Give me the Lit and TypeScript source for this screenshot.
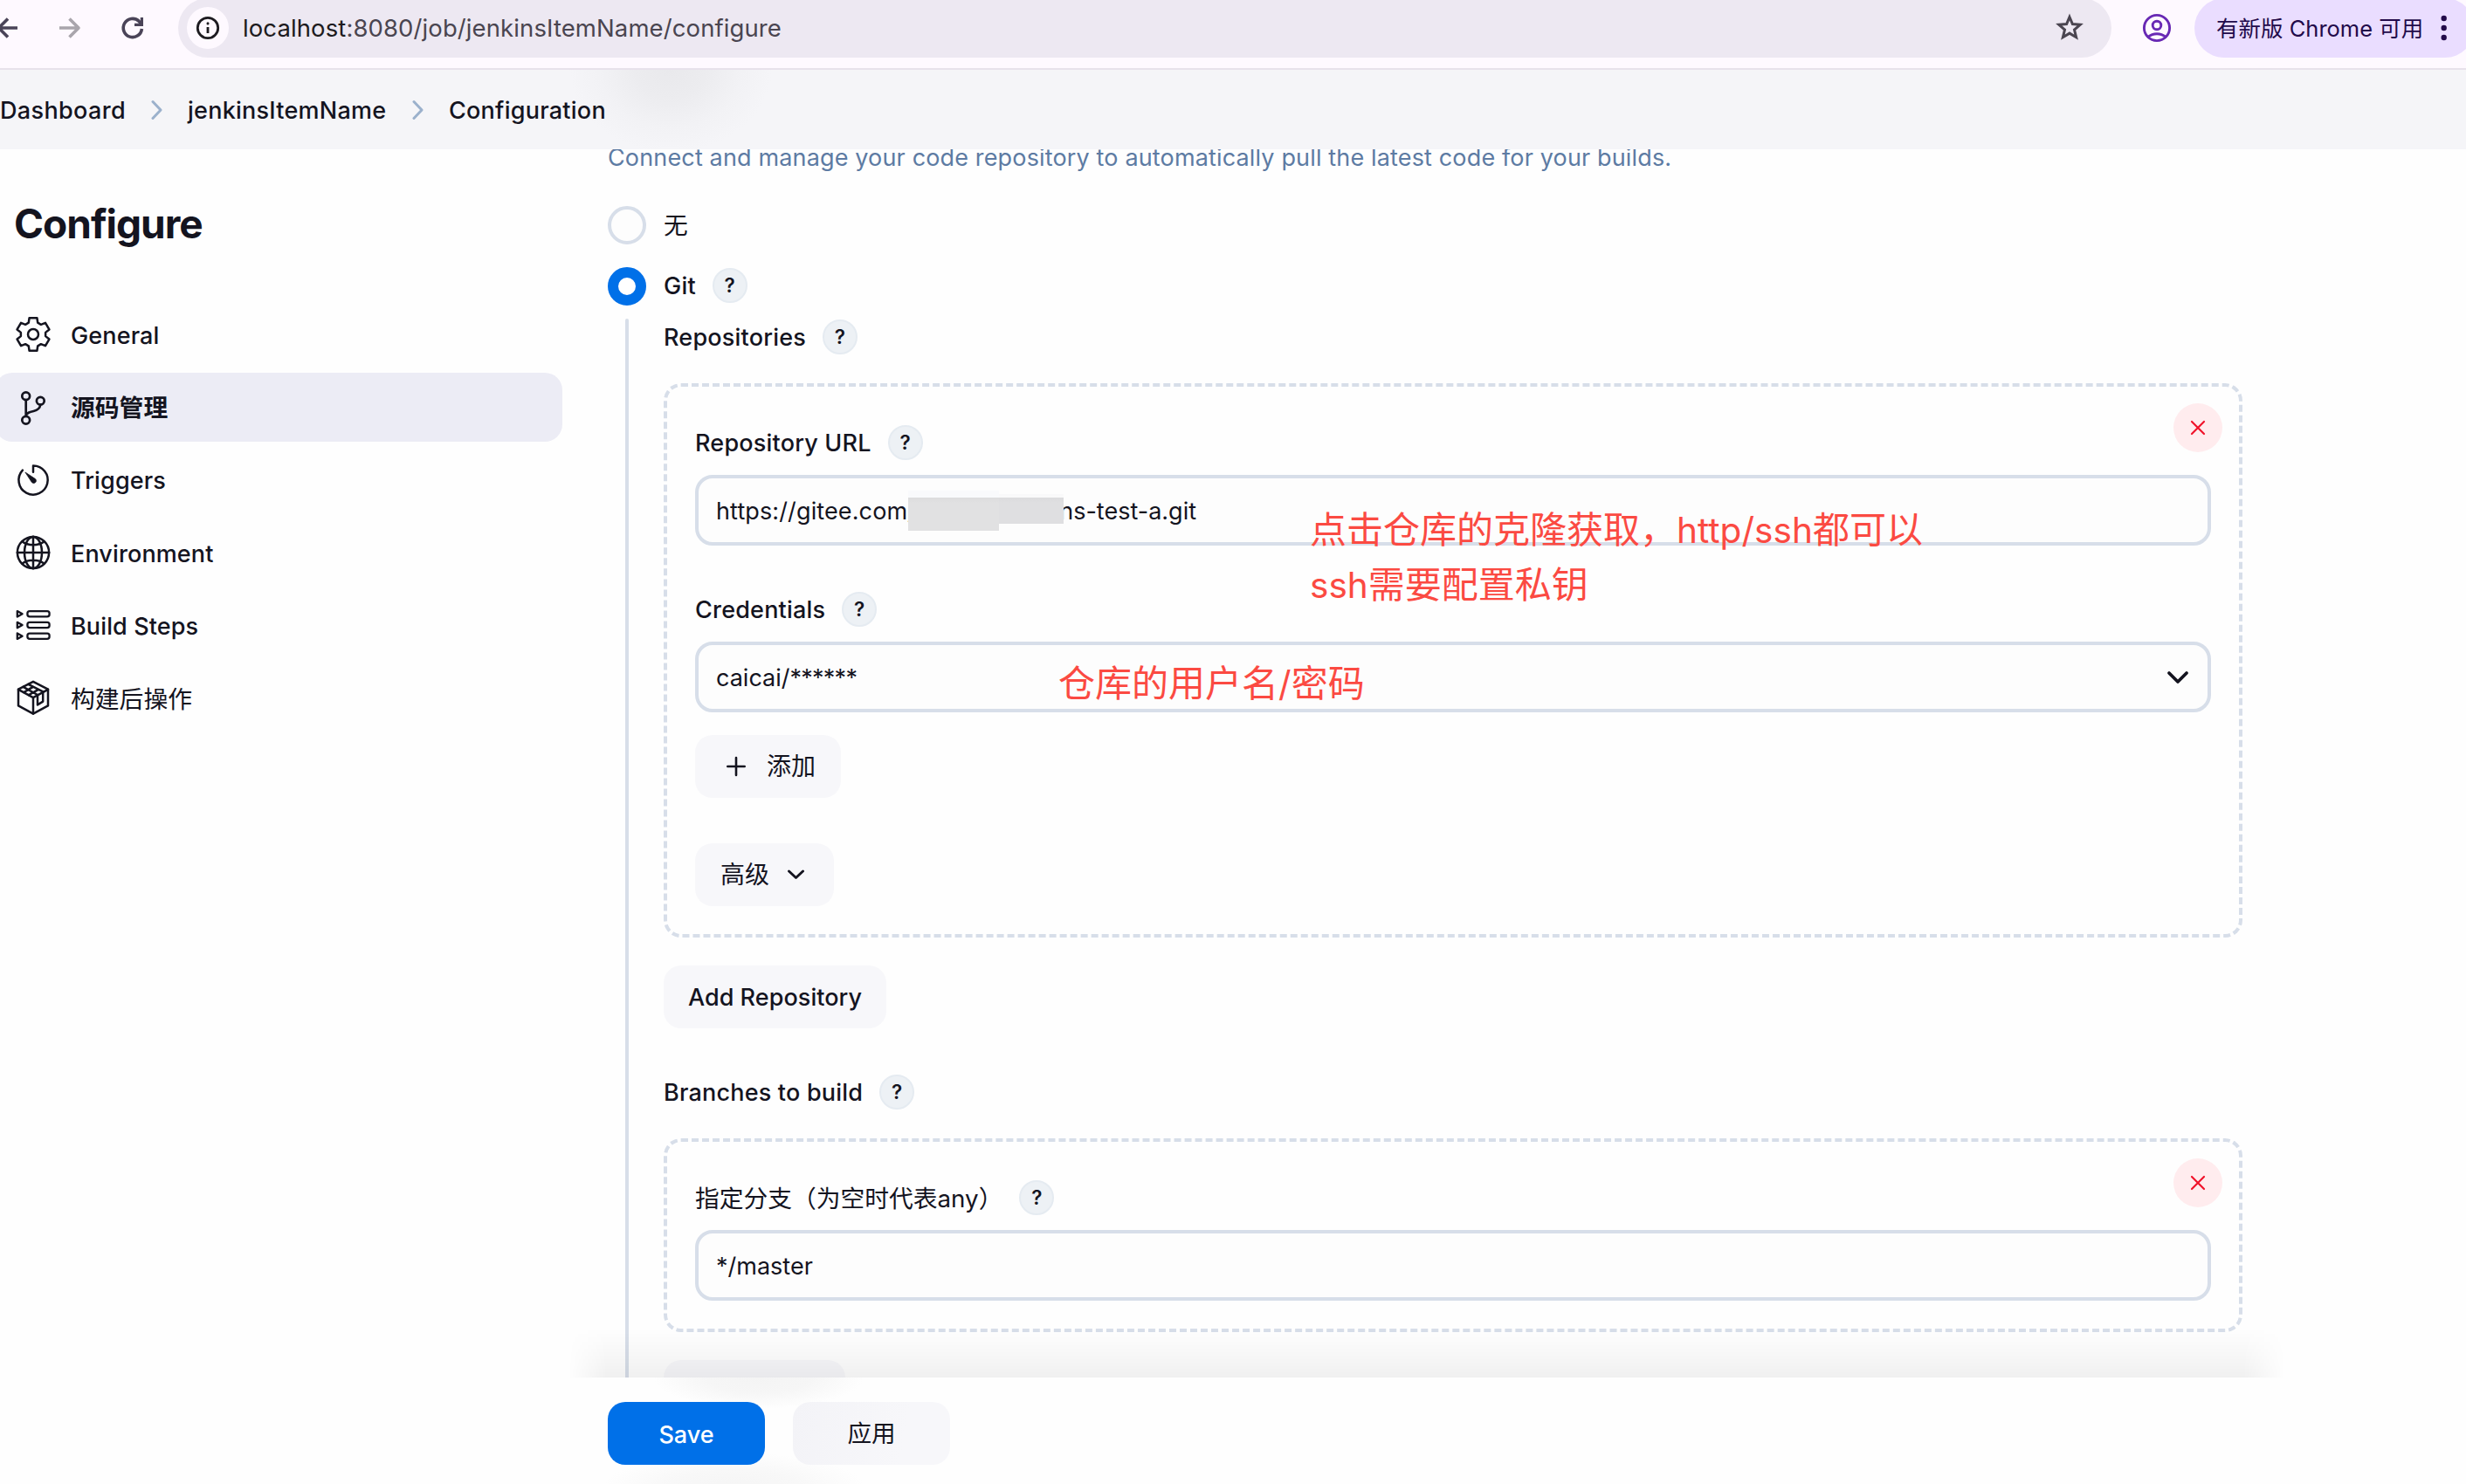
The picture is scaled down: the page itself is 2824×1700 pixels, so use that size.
import { LitElement, html, css, svg } from "lit";
import { customElement, property } from "lit/decorators.js";

/** Outline of a six-toothed gear centred on (20, 20). */
function gearPath(): string {
  const corners: [number, number][] = [
    [14.3, -21.5],
    [19.2, -13.3],
    [19.2, 13.3],
    [14.3, 21.5],
  ];
  const points: string[] = [];
  for (let k = 0; k < 6; k++) {
    for (const [radius, offset] of corners) {
      const a = ((60 * k + offset) * Math.PI) / 180;
      points.push(`${(20 + radius * Math.sin(a)).toFixed(2)} ${(20 - radius * Math.cos(a)).toFixed(2)}`);
    }
  }
  return `M${points.join("L")}Z`;
}

const navIcons: Record<string, unknown> = {
  gear: svg`<path d=${gearPath()} /><circle cx="20" cy="20" r="6" />`,
  branch: svg`<g stroke-width="2.7"><circle cx="11.7" cy="6.8" r="4.4" /><circle cx="28.3" cy="12.2" r="4.4" />
    <circle cx="11.7" cy="34.2" r="4.4" /><path d="M11.7 11.2V29.8M28.3 16.6C27.6 21.6 24.6 23 20.4 24C15.6 25.1 12.6 25.8 11.7 29" /></g>`,
  timer: svg`<path d="M20 10.8V3.4A16.6 16.6 0 1 1 7.9 8.7" />
    <path d="M11.2 11.2L22.4 18.6A2.8 2.8 0 1 1 18.2 22.2Z" fill="currentColor" stroke-width="0.8" />`,
  globe: svg`<g stroke-width="2.5"><circle cx="20" cy="20" r="18.1" /><ellipse cx="20" cy="20" rx="10" ry="18.1" />
    <path d="M20 1.8V38.2M1.8 20H38.2M7.6 7.6C14 12.6 26 12.6 32.4 7.6M7.6 32.4C14 27.4 26 27.4 32.4 32.4" /></g>`,
  steps: svg`<g stroke-width="2.3">${[7.3, 20, 32.7].map(
    (y) => svg`<rect x="13.4" y=${y - 3.1} width="25.2" height="6.2" rx="2.6" /><path d=${`M1.8 ${y - 3.2}L7.6 ${y}L1.8 ${y + 3.2}Z`} />`,
  )}</g>`,
  package: svg`<g stroke-width="2.5"><path d="M20 1.8L37 10.6V29.4L20 38.6L3 29.4V10.6Z" /><path d="M3 10.8L20 20.2L37 10.8M20 20.2V38.4" />
    <path d="M8.6 7.8L25 17V28.4L31.2 24.6V13.4L14.4 4.8M9.4 14L14.8 10.8M15 17.2L20.4 14M20 7.8L15.4 10.4M26 10.8L21.2 13.6" /></g>`,
};

@customElement("help-badge")
export class HelpBadge extends LitElement {
  static styles = css`
    :host {
      display: block;
      flex: none;
    }
    .badge {
      width: 40px;
      height: 40px;
      box-sizing: border-box;
      border: 2px solid #e5ebf1;
      border-radius: 50%;
      background: #edf1f5;
      display: flex;
      align-items: center;
      justify-content: center;
      font: 600 22.5px/36px Inter, sans-serif;
      color: #14141f;
    }
  `;
  render() {
    return html`<div class="badge">?</div>`;
  }
}

@customElement("side-item")
export class SideItem extends LitElement {
  @property() icon = "gear";
  @property() label = "";
  @property({ type: Boolean }) active = false;

  static styles = css`
    .item {
      display: flex;
      align-items: center;
      height: 79px;
      margin-left: -6px;
      width: 650px;
      box-sizing: border-box;
      padding-left: 24px;
      border-radius: 20px;
      gap: 23px;
      color: #14141f;
      font-size: 27px;
      font-weight: 480;
      letter-spacing: 0.12px;
      line-height: 40px;
      white-space: nowrap;
    }
    .item span {
      padding-top: 3px;
    }
    .han {
      font-size: 27.8px;
      letter-spacing: 0;
    }
    .regular {
      font-weight: 400;
    }
    .active {
      background: #ececf5;
      font-weight: 700;
    }
    .active span {
      padding-top: 1px;
    }
    svg {
      width: 40px;
      height: 40px;
      flex: none;
      fill: none;
      stroke: currentColor;
      stroke-width: 2.5;
      stroke-linejoin: round;
      stroke-linecap: round;
    }
  `;
  render() {
    const han = /[\u4e00-\u9fff]/.test(this.label);
    return html`<div class="item ${this.active ? "active" : ""} ${han ? "han" : ""} ${han && !this.active ? "regular" : ""}">
      <svg viewBox="0 0 40 40">${navIcons[this.icon]}</svg><span>${this.label}</span>
    </div>`;
  }
}

@customElement("app-root")
export class AppRoot extends LitElement {
  static styles = css`
    :host {
      display: block;
      width: 2824px;
      height: 1700px;
      overflow: hidden;
      background: #fefefe;
      color: #14141f;
      font-family: Inter, "Noto Sans CJK SC", sans-serif;
      font-size: 27px;
      line-height: 40px;
    }
    .page {
      display: flex;
      flex-direction: column;
      height: 1700px;
    }
    svg {
      display: block;
      flex: none;
      fill: none;
      stroke-linecap: round;
      stroke-linejoin: round;
    }

    /* browser toolbar */
    .toolbar {
      height: 78px;
      flex: none;
      background: #fef9ff;
      border-bottom: 2px solid #e7e1eb;
      display: flex;
      align-items: flex-start;
      overflow: hidden;
    }
    .nav {
      width: 204px;
      height: 64px;
      flex: none;
      stroke-linecap: butt;
    }
    .sharp {
      stroke-linejoin: miter;
    }
    .butt {
      stroke-linecap: butt;
    }
    .address {
      width: 2214px;
      height: 68px;
      margin-top: -2px;
      border-radius: 34px;
      background: #ede8f2;
      display: flex;
      align-items: center;
      box-sizing: border-box;
      padding: 0 30px 0 10px;
      flex: none;
    }
    .info {
      width: 48px;
      height: 48px;
      border-radius: 50%;
      background: #fef9ff;
      margin-right: 16px;
    }
    .url {
      flex: 1;
      font-size: 27.5px;
      letter-spacing: 0.1px;
      color: #4a4550;
      white-space: nowrap;
    }
    .host {
      color: #1d1b20;
    }
    .avatar {
      margin: 14px 25px 0 34px;
    }
    .update {
      width: 321px;
      height: 68px;
      margin-top: -2px;
      border-radius: 34px;
      background: #eaddff;
      color: #220a4a;
      font-size: 25.5px;
      display: flex;
      align-items: center;
      box-sizing: border-box;
      padding: 2px 0 0 25px;
      flex: none;
      white-space: nowrap;
    }
    .update-text {
      width: 251px;
    }
    .dots {
      fill: #220a4a;
      margin-bottom: 2px;
    }

    /* breadcrumbs */
    .crumbs {
      height: 91px;
      flex: none;
      box-sizing: border-box;
      background: radial-gradient(ellipse 116px 94px at 768px 0, #e9e9ec 0%, #ececef 35%, #f2f2f5 70%, #f5f5f8 100%) #f5f5f8;
      display: flex;
      align-items: center;
      font-weight: 500;
      white-space: nowrap;
    }
    .crumbs span {
      padding-top: 3px;
    }
    .crumb-dashboard {
      width: 173px;
      letter-spacing: 0.35px;
    }
    .crumb-item {
      width: 257px;
      margin-left: 28px;
      letter-spacing: 0.25px;
    }
    .crumb-last {
      margin-left: 28px;
      letter-spacing: 0.25px;
    }

    /* body */
    .body {
      flex: 1;
      min-height: 0;
      display: flex;
    }
    .sidebar {
      width: 651px;
      flex: none;
      display: flex;
      flex-direction: column;
      gap: 4.2px;
    }
    h1 {
      margin: 55px 0 53.8px 16px;
      font-size: 46px;
      line-height: 60px;
      font-weight: 700;
      letter-spacing: -1px;
    }
    .main {
      flex: 1;
      min-width: 0;
      display: flex;
      flex-direction: column;
    }
    .content {
      height: 1407px;
      flex: none;
      overflow: hidden;
      position: relative;
      box-sizing: border-box;
      padding-left: 45px;
    }
    .shade {
      position: absolute;
      left: 0;
      bottom: 0;
      width: 1966px;
      height: 56px;
      background: linear-gradient(rgba(0, 0, 0, 0), rgba(0, 0, 0, 0.022) 45%, rgba(0, 0, 0, 0.055));
      mask-image: linear-gradient(90deg, transparent, #000 44px, #000 1918px, transparent);
    }
    .desc {
      margin-top: -10px;
      color: #5d7ba3;
      letter-spacing: 0.15px;
      white-space: nowrap;
    }
    .choice {
      display: flex;
      align-items: center;
      height: 44px;
      font-weight: 480;
    }
    .choice-none {
      margin-top: 35px;
    }
    .choice-git {
      margin-top: 26px;
    }
    .radio {
      width: 44px;
      height: 44px;
      box-sizing: border-box;
      border-radius: 50%;
      border: 4px solid #d7dee9;
      background: #fdfdfd;
      margin-right: 20px;
    }
    .radio-on {
      border: 12.5px solid #0070e8;
      background: #fff;
    }
    .lift {
      margin-bottom: 2px;
    }
    .nested {
      display: flex;
      margin: 15px 0 0 20px;
    }
    .rail {
      width: 4px;
      height: 1300px;
      flex: none;
      border-radius: 2px;
      background: #d7dee9;
    }
    .fields {
      margin-left: 40px;
      width: 1808px;
      padding-top: 1px;
    }
    .label {
      display: flex;
      align-items: center;
      height: 40px;
      gap: 19px;
      font-weight: 480;
      letter-spacing: 0.2px;
      white-space: nowrap;
    }
    .label span {
      padding-top: 2px;
    }
    .label .han,
    .han {
      font-size: 27.75px;
      font-weight: 400;
      letter-spacing: 0;
    }
    .choice-none .han {
      margin-top: -1px;
    }
    .chunk {
      position: relative;
      box-sizing: border-box;
      border: 4px dashed #d7dee9;
      border-radius: 20px;
      padding: 44px 32px 32px;
      margin-top: 33px;
    }
    .close {
      position: absolute;
      top: 19px;
      right: 19px;
      width: 56px;
      height: 56px;
      border-radius: 50%;
      background: #ffecee;
    }
    .input {
      height: 81px;
      box-sizing: border-box;
      margin-top: 17px;
      border: 4px solid #d7dee9;
      border-radius: 20px;
      background: #fdfdfd;
      display: flex;
      align-items: center;
      padding: 2px 20px 0;
      white-space: nowrap;
    }
    .second {
      margin-top: 53px;
    }
    .url-head {
      width: 220px;
      letter-spacing: 0.12px;
    }
    .url-tail {
      width: 152px;
      display: flex;
      justify-content: flex-end;
    }
    .mask {
      display: flex;
      align-self: flex-start;
      margin-top: 12px;
      height: 46px;
      z-index: 1;
    }
    .mask-a {
      width: 104px;
      height: 46px;
      background: linear-gradient(#f9fafc 0 8px, #dcdcdd 8px, #e1e1e2 14px);
    }
    .mask-b {
      width: 74px;
      height: 38px;
      background: linear-gradient(#fdfdfd 0 4px, #f9f9fa 4px 8px, #dbdbdd 8px, #dfdfe1 14px);
    }
    .grow {
      flex: 1;
    }
    .stars {
      letter-spacing: -0.75px;
    }
    .btn {
      display: flex;
      align-items: center;
      width: max-content;
      height: 72px;
      border-radius: 20px;
      background: #f7f7fa;
      box-sizing: border-box;
      font-weight: 480;
      white-space: nowrap;
    }
    .btn-add {
      width: 167px;
      margin-top: 26px;
      padding-left: 36px;
      gap: 24px;
      font-size: 28px;
      font-weight: 400;
    }
    .btn-adv {
      width: 159px;
      margin-top: 52px;
      padding-left: 29px;
      gap: 20px;
      font-size: 28px;
      font-weight: 400;
    }
    .btn-repo {
      width: 255px;
      margin-top: 32px;
      padding-top: 2px;
      justify-content: center;
      letter-spacing: 0.05px;
    }
    .btn-more {
      width: 208px;
      margin-top: 32px;
    }

    /* red annotations over the form */
    .note {
      position: absolute;
      color: #fb4a42;
      font-size: 42px;
      line-height: 62px;
      white-space: nowrap;
    }
    .latin {
      font-size: 40.5px;
      letter-spacing: 0.05px;
    }
    .note-url {
      left: 849px;
      top: 405px;
    }
    .note-cred {
      left: 561px;
      top: 581px;
    }

    /* footer */
    .footer {
      flex: 1;
      display: flex;
      gap: 32px;
      padding: 28px 0 0 45px;
      background:
        radial-gradient(ellipse 120px 36px at 218px 0, #f4f4f4, #f6f6f6 50%, rgba(254, 254, 254, 0)),
        radial-gradient(ellipse 150px 40px at 190px 126px, #f5f5f5, #f8f8f8 50%, rgba(254, 254, 254, 0)),
        #fefefe;
    }
    .btn-foot {
      width: 180px;
      justify-content: center;
    }
    .btn-save {
      background: #0070e8;
      color: #fff;
      padding-top: 3px;
    }
    .btn-apply {
      font-size: 27.6px;
      font-weight: 400;
      background: linear-gradient(100deg, #f3f3f7, #f7f7fa 70%);
    }
  `;

  private closeButton() {
    return html`<div class="close">
      <svg width="56" height="56" stroke="#f0142b" stroke-width="2.2"><path d="M21 21L35 35M35 21L21 35" /></svg>
    </div>`;
  }

  private crumbArrow() {
    return html`<svg width="14" height="24" stroke="#9bb1cc" stroke-width="3"><path d="M2 2.5L11 12L2 21.5" /></svg>`;
  }

  private toolbar() {
    return html`<div class="toolbar">
      <svg class="nav" viewBox="0 0 204 64" stroke-width="3.6">
        <path stroke="#4a4458" d="M20 32H-1M9 21.5L-1.5 32L9 42.5" />
        <path stroke="#a9a5ac" d="M68 32H90M79.5 21.5L90 32L79.5 42.5" />
        <g stroke="#4a4458" class="sharp">
          <path d="M162.4 33A10.6 10.6 0 1 1 159 24.2L162 27.4" />
          <path d="M162.4 20V28.4H154" stroke-width="3.2" />
        </g>
      </svg>
      <div class="address">
        <div class="info">
          <svg width="48" height="48" stroke="#1d1b20">
            <circle cx="24" cy="24" r="11.7" stroke-width="2.8" />
            <path class="butt" d="M24 23V30" stroke-width="2.8" />
            <path d="M24 18.8V18.9" stroke-width="3" />
          </svg>
        </div>
        <div class="url"><span class="host">localhost</span>:8080/job/jenkinsItemName/configure</div>
        <svg class="sharp" width="36" height="36" viewBox="0 0 36 36" stroke="#4a4550" stroke-width="3">
          <path d="M18 5.5L21.4 13.6L30.2 14.3L23.5 20.1L25.6 28.7L18 24.1L10.4 28.7L12.5 20.1L5.8 14.3L14.6 13.6Z" />
        </svg>
      </div>
      <svg class="avatar" width="36" height="36" stroke="#6829b4" stroke-width="2.9">
        <circle cx="18" cy="18" r="14.6" /><circle cx="18" cy="15" r="4.8" /><path d="M8.2 28.2C13.5 23.6 22.5 23.6 27.8 28.2" />
      </svg>
      <div class="update">
        <span class="update-text">有新版 Chrome 可用</span>
        <svg class="dots" width="20" height="36">
          <circle cx="9.7" cy="7" r="3.2" /><circle cx="9.7" cy="18" r="3.2" /><circle cx="9.7" cy="29" r="3.2" />
        </svg>
      </div>
    </div>`;
  }

  private repositoryChunk() {
    return html`<div class="chunk">
      ${this.closeButton()}
      <div class="label"><span>Repository URL</span><help-badge></help-badge></div>
      <div class="input">
        <span class="url-head">https://gitee.com/</span>
        <div class="mask"><div class="mask-a"></div><div class="mask-b"></div></div>
        <span class="url-tail">ns-test-a.git</span>
      </div>
      <div class="label second"><span>Credentials</span><help-badge></help-badge></div>
      <div class="input">
        <span class="grow">caicai/<span class="stars">******</span></span>
        <svg width="28" height="20" stroke="#14141f" stroke-width="3.8"><path d="M4 4L14 14L24 4" /></svg>
      </div>
      <div class="btn btn-add">
        <svg width="22" height="24" stroke="#14141f" stroke-width="2.6"><path d="M11 2V22M1.3 12H20.7" /></svg>
        <span>添加</span>
      </div>
      <div class="btn btn-adv">
        <span>高级</span>
        <svg width="20" height="16" stroke="#14141f" stroke-width="2.9"><path d="M2.5 4L10.5 11.5L18.5 4" /></svg>
      </div>
    </div>`;
  }

  render() {
    return html`<div class="page">
      ${this.toolbar()}
      <div class="crumbs">
        <span class="crumb-dashboard">Dashboard</span>${this.crumbArrow()}
        <span class="crumb-item">jenkinsItemName</span>${this.crumbArrow()}
        <span class="crumb-last">Configuration</span>
      </div>
      <div class="body">
        <div class="sidebar">
          <h1>Configure</h1>
          <side-item icon="gear" label="General"></side-item>
          <side-item icon="branch" label="源码管理" active></side-item>
          <side-item icon="timer" label="Triggers"></side-item>
          <side-item icon="globe" label="Environment"></side-item>
          <side-item icon="steps" label="Build Steps"></side-item>
          <side-item icon="package" label="构建后操作"></side-item>
        </div>
        <div class="main">
          <div class="content">
            <div class="desc">Connect and manage your code repository to automatically pull the latest code for your builds.</div>
            <div class="choice choice-none"><div class="radio"></div><span class="han">无</span></div>
            <div class="choice choice-git">
              <div class="radio radio-on"></div>
              <div class="label lift"><span>Git</span><help-badge></help-badge></div>
            </div>
            <div class="nested">
              <div class="rail"></div>
              <div class="fields">
                <div class="label"><span>Repositories</span><help-badge></help-badge></div>
                ${this.repositoryChunk()}
                <div class="btn btn-repo">Add Repository</div>
                <div class="label second"><span>Branches to build</span><help-badge></help-badge></div>
                <div class="chunk">
                  ${this.closeButton()}
                  <div class="label"><span class="han">指定分支（为空时代表any）</span><help-badge></help-badge></div>
                  <div class="input">*/master</div>
                </div>
                <div class="btn btn-more"></div>
              </div>
            </div>
            <div class="note note-url">
              点击仓库的克隆获取，<span class="latin">http/ssh</span>都可以<br /><span class="latin">ssh</span>需要配置私钥
            </div>
            <div class="note note-cred">仓库的用户名<span class="latin">/</span>密码</div>
            <div class="shade"></div>
          </div>
          <div class="footer">
            <div class="btn btn-foot btn-save">Save</div>
            <div class="btn btn-foot btn-apply">应用</div>
          </div>
        </div>
      </div>
    </div>`;
  }
}
